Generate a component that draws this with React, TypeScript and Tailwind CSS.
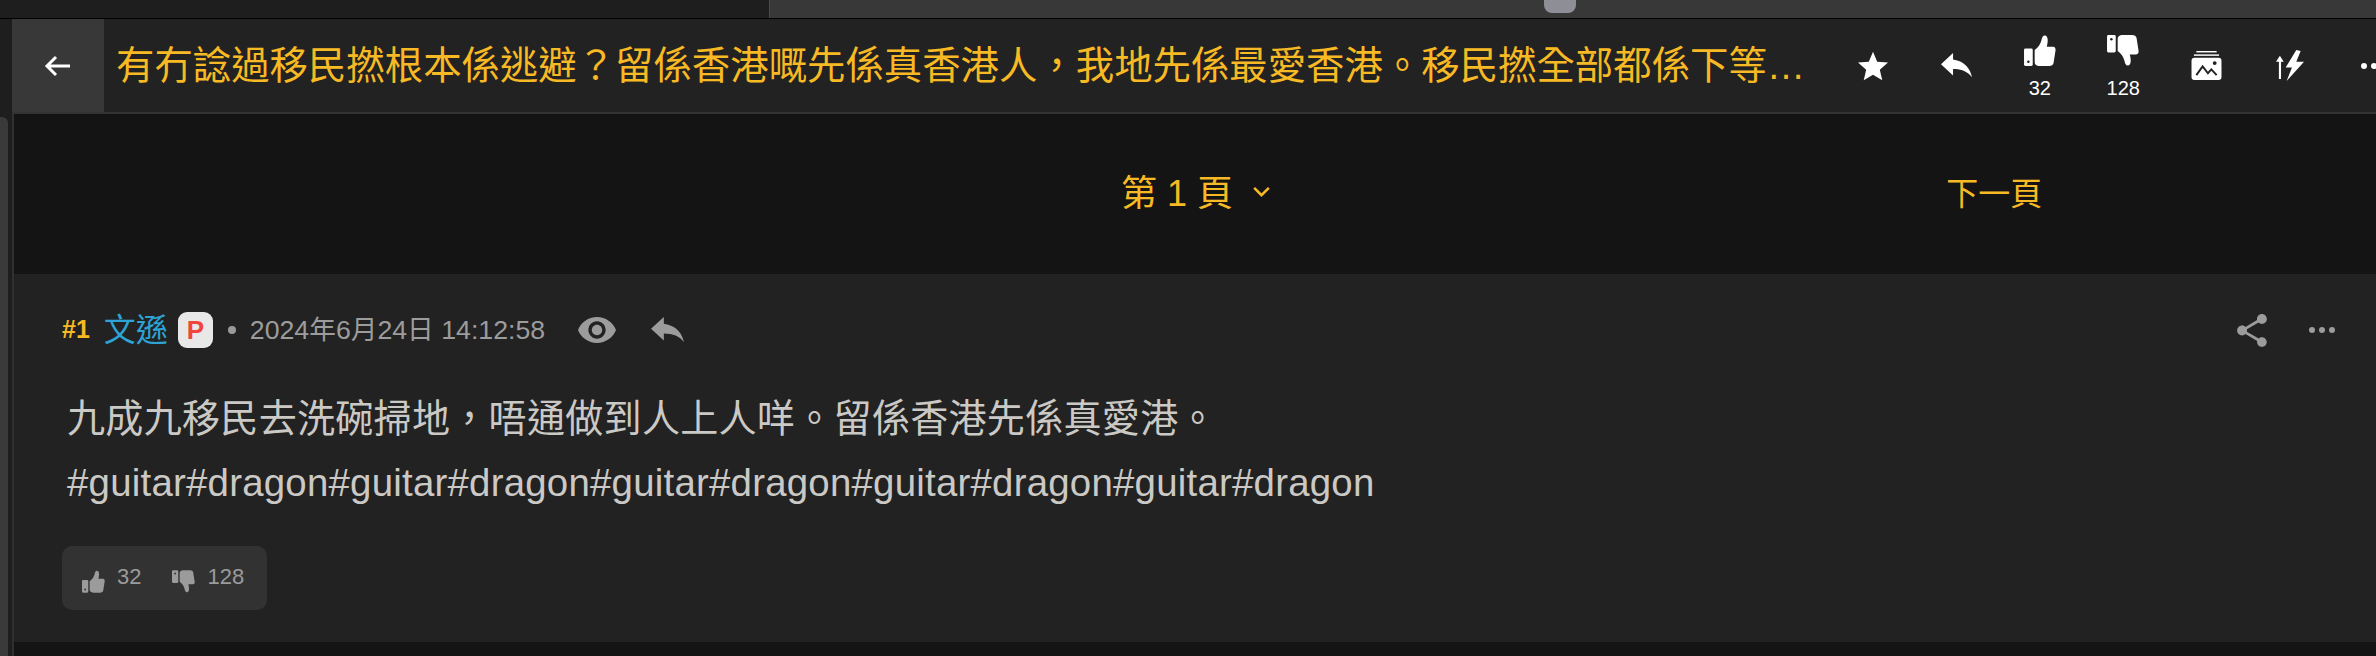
const YELLOW = "#f7b924";

const ThumbUp = ({ className = "", hole = "#222222" }: { className?: string; hole?: string }) => (
  <svg viewBox="0 0 33 32" className={className} fill="currentColor">
    <rect x="0" y="14" width="9" height="18" rx="1.5" />
    <circle cx="4.5" cy="27.5" r="1.3" fill={hole} />
    <path d="M11 15.5C14.5 13 17 9.5 18 5.5 18.5 2 20 0 22 .5c3 1 3 6 1.5 11.5H30c2 0 3 2 2.5 4l-2 13c-.5 2-2 3-4.500 3H16c-2.500 0-5-1.500-5-4z" />
  </svg>
);

const ThumbDown = ({ className = "", hole = "#222222" }: { className?: string; hole?: string }) => (
  <svg viewBox="0 0 33 32" className={className} fill="currentColor">
    <g transform="translate(0 32) scale(1 -1)">
      <rect x="0" y="14" width="9" height="18" rx="1.500" />
      <circle cx="4.500" cy="27.500" r="1.300" fill={hole} />
      <path d="M11 15.500C14.500 13 17 9.500 18 5.500 18.500 2 20 0 22 .5c3 1 3 6 1.500 11.500H30c2 0 3 2 2.500 4l-2 13c-.5 2-2 3-4.500 3H16c-2.500 0-5-1.500-5-4z" />
    </g>
  </svg>
);

const ReplyIcon = ({ className = "" }: { className?: string }) => (
  <svg viewBox="3 5 18 15.500" preserveAspectRatio="none" className={className} fill="currentColor">
    <path d="M10 9V5l-7 7 7 7v-4.100c5 0 8.500 1.600 11 5.100-1-5-4-10-11-11z" />
  </svg>
);

const StarIcon = ({ className = "" }: { className?: string }) => (
  <svg viewBox="2 2 20 19" className={className} fill="currentColor">
    <path d="M12 17.270L18.180 21l-1.640-7.030L22 9.240l-7.190-.61L12 2 9.190 8.630 2 9.240l5.460 4.730L5.820 21z" />
  </svg>
);

const AlbumIcon = ({ className = "" }: { className?: string }) => (
  <svg viewBox="0 0 31 30" className={className}>
    <rect x="5" y="0" width="21" height="1.500" fill="currentColor" />
    <rect x="2.500" y="3.500" width="26" height="1.500" fill="currentColor" />
    <rect x="0" y="7" width="31" height="23" rx="3" fill="currentColor" />
    <circle cx="24" cy="12.500" r="2" fill="#222222" />
    <path d="M5 25l6.500-9 5.500 7 3.500-4 5.500 6" fill="none" stroke="#222222" strokeWidth="2" />
  </svg>
);

const FlashIcon = ({ className = "" }: { className?: string }) => (
  <svg viewBox="0 0 30 32" className={className} fill="currentColor">
    <path d="M4 6l4 6H5.200v18H3V12H0z" />
    <path d="M21 0L10 18h6.500L11 32l18-20h-8l4.500-11z" />
  </svg>
);

const EyeIcon = ({ className = "" }: { className?: string }) => (
  <svg viewBox="1 4.500 22 15" className={className} fill="currentColor">
    <path d="M12 4.500C7 4.500 2.730 7.610 1 12c1.730 4.390 6 7.500 11 7.500s9.270-3.110 11-7.500c-1.730-4.390-6-7.500-11-7.500zM12 17c-2.760 0-5-2.240-5-5s2.240-5 5-5 5 2.240 5 5-2.240 5-5 5zm0-8c-1.660 0-3 1.340-3 3s1.340 3 3 3 3-1.340 3-3-1.340-3-3-3z" />
  </svg>
);

const ShareIcon = ({ className = "" }: { className?: string }) => (
  <svg viewBox="3 2 18 20" className={className} fill="currentColor">
    <path d="M18 16.080c-.76 0-1.440.3-1.960.77L8.910 12.700c.05-.23.09-.46.09-.7s-.04-.47-.09-.7l7.050-4.110c.54.5 1.250.81 2.040.81 1.660 0 3-1.340 3-3s-1.340-3-3-3-3 1.340-3 3c0 .24.04.47.09.7L8.040 9.810C7.500 9.310 6.790 9 6 9c-1.660 0-3 1.340-3 3s1.340 3 3 3c.79 0 1.500-.31 2.040-.81l7.120 4.160c-.05.21-.08.43-.08.65 0 1.610 1.310 2.920 2.920 2.920s2.920-1.310 2.920-2.920-1.310-2.920-2.920-2.920z" />
  </svg>
);

const Dots = ({ className = "" }: { className?: string }) => (
  <div className={`flex items-center gap-[4px] ${className}`}>
    <div className="w-[6px] h-[6px] rounded-full bg-current" />
    <div className="w-[6px] h-[6px] rounded-full bg-current" />
    <div className="w-[6px] h-[6px] rounded-full bg-current" />
  </div>
);

const Chevron = () => (
  <svg viewBox="0 0 20 12" className="w-[19px] h-[11px] ml-[19px] mb-[6px]" fill="none" stroke={YELLOW} strokeWidth="2.800">
    <path d="M2 2l8 8 8-8" />
  </svg>
);

const HeaderSlot = ({ children }: { children: React.ReactNode }) => (
  <div className="w-[83.500px] h-full shrink-0 flex flex-col items-center justify-center text-white">
    {children}
  </div>
);

export default function App() {
  return (
    <div
      className="w-[2376px] h-[656px] overflow-hidden flex flex-col bg-[#141414]"
      style={{ fontFamily: '"Liberation Sans", "Noto Sans CJK TC", sans-serif' }}
    >
      {/* Browser strip */}
      <div className="relative h-[19px] shrink-0 flex border-b border-black">
        <div className="w-[770px] bg-[#1e1e1e] border-r border-[#4a4a4a]" />
        <div className="flex-1 bg-[#383838]" />
        <div className="absolute left-[1544px] top-0 w-[32px] h-[13px] rounded-b-[8px] bg-[#8e8e96]" />
      </div>

      <div className="flex flex-1 min-h-0">
        {/* Left rail */}
        <div className="w-[12px] shrink-0 bg-[#1e1e1e] pt-[98px]">
          <div className="w-[8px] h-full bg-[#3a3a3a] rounded-tr-[6px]" />
        </div>

        <div className="flex-1 min-w-0 flex flex-col">
          {/* Topic header */}
          <div className="h-[95px] shrink-0 flex items-stretch overflow-hidden bg-[#222222] border-b-[2px] border-[#333333]">
            <div className="w-[92px] shrink-0 bg-[#383838] flex items-center justify-center">
              <svg viewBox="0 0 26 22" className="w-[26px] h-[22px] mr-[3px]" fill="none" stroke="#ffffff" strokeWidth="3">
                <path d="M12 2L3 11l9 9M3 11h23" />
              </svg>
            </div>
            <div
              className="w-[1707px] ml-[12px] shrink-0 self-center whitespace-nowrap text-[38.400px] leading-[48px]"
              style={{ color: YELLOW }}
            >
              有冇諗過移民撚根本係逃避？留係香港嘅先係真香港人，我地先係最愛香港。移民撚全部都係下等…
            </div>
            <div className="ml-[8px] flex items-center shrink-0">
              <HeaderSlot>
                <StarIcon className="w-[30px] h-[30px]" />
              </HeaderSlot>
              <HeaderSlot>
                <ReplyIcon className="w-[31px] h-[25px]" />
              </HeaderSlot>
              <HeaderSlot>
                <ThumbUp className="w-[32px] h-[31px] mt-[3px] mb-[11px]" />
                <span className="text-[20px] leading-[22px]">32</span>
              </HeaderSlot>
              <HeaderSlot>
                <ThumbDown className="w-[32px] h-[31px] mt-[3px] mb-[11px]" />
                <span className="text-[20px] leading-[22px]">128</span>
              </HeaderSlot>
              <HeaderSlot>
                <AlbumIcon className="w-[31px] h-[29px]" />
              </HeaderSlot>
              <HeaderSlot>
                <FlashIcon className="w-[29px] h-[31px]" />
              </HeaderSlot>
              <HeaderSlot>
                <Dots />
              </HeaderSlot>
            </div>
          </div>

          <div className="flex-1 min-h-0 flex flex-col border-l-[2px] border-[#303030]">
            {/* Pagination */}
            <div className="h-[160px] shrink-0 grid grid-cols-3 items-center bg-[#141414]" style={{ color: YELLOW }}>
              <div />
              <div className="flex items-center justify-center text-[36px] pl-[2px]">
                <span>第 1 頁</span>
                <Chevron />
              </div>
              <div className="text-center pl-[24px] text-[32px]">下一頁</div>
            </div>

            {/* Post */}
            <div className="h-[368px] shrink-0 bg-[#222222] pl-[48px] pr-[41px] pt-[37px]">
              <div className="flex items-center h-[38px]">
                <span className="text-[25px] font-bold" style={{ color: YELLOW }}>#1</span>
                <span className="ml-[14px] text-[32px] text-[#2ea3d6]">文遜</span>
                <span className="ml-[10px] w-[35px] h-[36px] rounded-[9px] bg-[#e8e8e8] flex items-center justify-center text-[26px] font-bold text-[#f0443c]">P</span>
                <span className="ml-[15px] w-[8px] h-[8px] rounded-full bg-[#9a9a9a]" />
                <span className="ml-[14px] text-[26.700px] text-[#9c9c9c]">2024年6月24日 14:12:58</span>
                <EyeIcon className="ml-[33px] w-[38px] h-[26px] text-[#9c9c9c]" />
                <ReplyIcon className="ml-[35px] w-[33px] h-[26px] text-[#9c9c9c]" />
                <ShareIcon className="ml-auto w-[30px] h-[33px] text-[#9c9c9c]" />
                <Dots className="ml-[42px] text-[#9c9c9c]" />
              </div>
              <div className="mt-[39px] pl-[5px] text-[38.400px] leading-[63px] text-[#cbc9c5]">
                <div className="text-[38.100px] tracking-[0.250px]">九成九移民去洗碗掃地，唔通做到人上人咩。留係香港先係真愛港。</div>
                <div className="tracking-[0.230px]">#guitar#dragon#guitar#dragon#guitar#dragon#guitar#dragon#guitar#dragon</div>
              </div>
              <div className="mt-[32px] inline-flex items-center w-[205px] h-[64px] pl-[20px] rounded-[10px] bg-[#323232] text-[22px] text-[#9b9b9b]">
                <ThumbUp className="w-[23px] h-[23px] mt-[6px]" hole="#323232" />
                <span className="ml-[12px] -mt-[3px]">32</span>
                <ThumbDown className="ml-[31px] w-[23px] h-[23px] mt-[6px]" hole="#323232" />
                <span className="ml-[12px] -mt-[3px]">128</span>
              </div>
            </div>
          </div>
        </div>
      </div>
    </div>
  );
}
